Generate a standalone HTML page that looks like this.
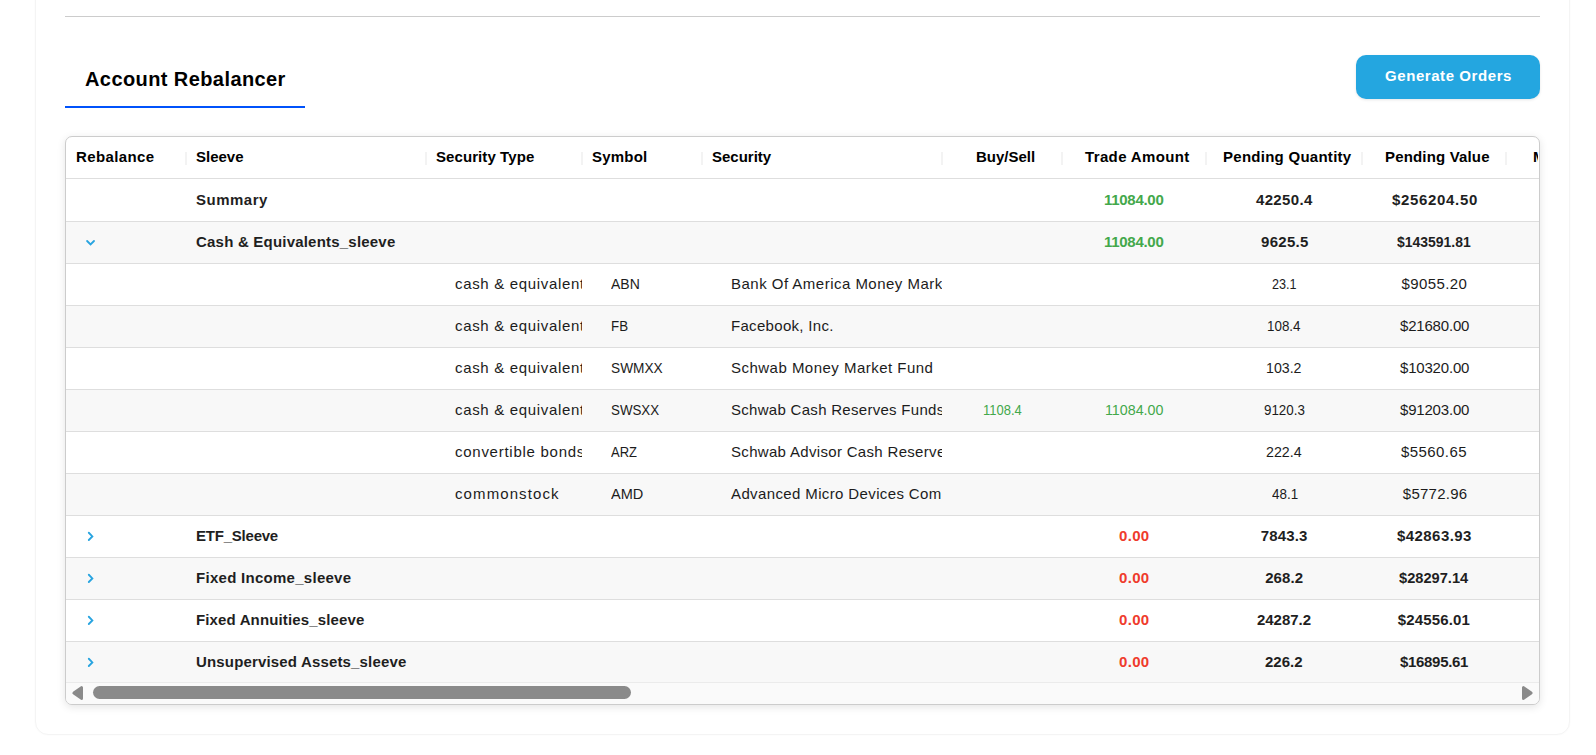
<!DOCTYPE html>
<html><head><meta charset="utf-8">
<style>
html,body{margin:0;padding:0;width:1596px;height:755px;overflow:hidden;background:#fff;}
body{position:relative;font-family:"Liberation Sans",sans-serif;}
.card{position:absolute;left:35px;top:-20px;height:755px;border:1px solid #f4f4f4;border-radius:13px;box-shadow:0 0 2px rgba(0,0,0,.03);box-sizing:border-box;width:1535px;}
.topline{position:absolute;left:65px;top:16px;width:1475px;height:1px;background:#cccccc;}
.tab{position:absolute;left:65px;top:106px;width:240px;height:2px;background:#0052fb;}
.btn{position:absolute;left:1356px;top:55px;width:184px;height:44px;border-radius:10px;background:#24a6e0;box-shadow:0 1px 3px rgba(0,0,0,.10);}
.tbl{position:absolute;left:65px;top:136px;width:1475px;height:569px;box-sizing:border-box;border:1px solid #cccccc;border-radius:7px;box-shadow:0 2px 9px rgba(0,0,0,.11);overflow:hidden;background:#fff;}
.row{position:absolute;left:0;width:1473px;height:42px;box-sizing:border-box;border-bottom:1px solid #dedede;}
.alt{background:#f8f8f8;}
.sep{position:absolute;top:15px;width:2px;height:13px;background:#f3f3f3;}
.sbar{position:absolute;left:0;top:545px;width:1473px;height:22px;box-sizing:border-box;border-top:1px solid #ebebeb;background:#fafafa;}
.thumb{position:absolute;left:27px;top:3px;width:538px;height:13px;border-radius:7px;background:#8a8a8a;}
.t{position:absolute;white-space:nowrap;line-height:18px;font-size:15px;}
.th{font-weight:bold;color:#000;}
.tb{font-weight:bold;color:#1f1f1f;}
.tr{color:#1c1c1c;}
.cg{color:#43a84b;}
.cr{color:#ef3b2c;}
.ttl{font-weight:bold;color:#000;font-size:20px;line-height:22px;}
.bt{font-weight:bold;color:#fff;font-size:15px;}
.clip{position:absolute;overflow:hidden;}
.chev{position:absolute;}
</style></head><body>
<div class="card"></div>
<div class="topline"></div>
<div class="tab"></div>
<div class="btn"></div>
<div class="tbl">
  <div class="row" style="top:0;height:42px">
    <div class="sep" style="left:119px"></div>
    <div class="sep" style="left:359px"></div>
    <div class="sep" style="left:515px"></div>
    <div class="sep" style="left:635px"></div>
    <div class="sep" style="left:875px"></div>
    <div class="sep" style="left:995px"></div>
    <div class="sep" style="left:1139px"></div>
    <div class="sep" style="left:1295px"></div>
    <div class="sep" style="left:1439px"></div>
  </div>
  <div class="row" style="top:42px;height:43px"></div>
  <div class="row alt" style="top:85px"></div>
  <div class="row" style="top:127px"></div>
  <div class="row alt" style="top:169px"></div>
  <div class="row" style="top:211px"></div>
  <div class="row alt" style="top:253px"></div>
  <div class="row" style="top:295px"></div>
  <div class="row alt" style="top:337px"></div>
  <div class="row" style="top:379px"></div>
  <div class="row alt" style="top:421px"></div>
  <div class="row" style="top:463px"></div>
  <div class="row alt" style="top:505px;height:41px;border-bottom:0"></div>
  <div class="sbar">
    <svg style="position:absolute;left:5px;top:2px" width="13" height="16" viewBox="0 0 13 16"><path d="M2.9 8 L10.5 2.6 L10.5 13.4 Z" fill="#8a8a8a" stroke="#8a8a8a" stroke-width="3" stroke-linejoin="round"/></svg>
    <div class="thumb"></div>
    <svg style="position:absolute;left:1455px;top:2px" width="13" height="16" viewBox="0 0 13 16"><path d="M10.1 8 L2.5 2.6 L2.5 13.4 Z" fill="#8a8a8a" stroke="#8a8a8a" stroke-width="3" stroke-linejoin="round"/></svg>
  </div>
</div>
<svg class="chev" style="left:84px;top:234px" width="14" height="14" viewBox="0 0 14 14"><path d="M3.1 7 L6.55 10.4 L10 7" fill="none" stroke="#28a4e0" stroke-width="1.85" stroke-linecap="round" stroke-linejoin="miter"/></svg>
<svg class="chev" style="left:84px;top:529px" width="14" height="14" viewBox="0 0 14 14"><path d="M4.8 3.75 L8.35 7.4 L4.8 11" fill="none" stroke="#28a4e0" stroke-width="1.85" stroke-linecap="round" stroke-linejoin="miter"/></svg>
<svg class="chev" style="left:84px;top:571px" width="14" height="14" viewBox="0 0 14 14"><path d="M4.8 3.75 L8.35 7.4 L4.8 11" fill="none" stroke="#28a4e0" stroke-width="1.85" stroke-linecap="round" stroke-linejoin="miter"/></svg>
<svg class="chev" style="left:84px;top:613px" width="14" height="14" viewBox="0 0 14 14"><path d="M4.8 3.75 L8.35 7.4 L4.8 11" fill="none" stroke="#28a4e0" stroke-width="1.85" stroke-linecap="round" stroke-linejoin="miter"/></svg>
<svg class="chev" style="left:84px;top:655px" width="14" height="14" viewBox="0 0 14 14"><path d="M4.8 3.75 L8.35 7.4 L4.8 11" fill="none" stroke="#28a4e0" stroke-width="1.85" stroke-linecap="round" stroke-linejoin="miter"/></svg>
<span id="h0" class="t th" style="left:76.00px;top:148px;letter-spacing:0.375px">Rebalance</span>
<span id="h1" class="t th" style="left:196.00px;top:148px;letter-spacing:0.000px">Sleeve</span>
<span id="h2" class="t th" style="left:436.00px;top:148px;letter-spacing:0.083px">Security Type</span>
<span id="h3" class="t th" style="left:592.00px;top:148px;letter-spacing:0.200px">Symbol</span>
<span id="h4" class="t th" style="left:712.00px;top:148px;letter-spacing:0.000px">Security</span>
<span id="h5" class="t th" style="left:976.00px;top:148px;letter-spacing:0.000px">Buy/Sell</span>
<span id="h6" class="t th" style="left:1085.00px;top:148px;letter-spacing:0.364px">Trade Amount</span>
<span id="h7" class="t th" style="left:1223.00px;top:148px;letter-spacing:0.267px">Pending Quantity</span>
<span id="h8" class="t th" style="left:1385.00px;top:148px;letter-spacing:0.167px">Pending Value</span>
<div class="clip" style="left:1505px;width:33px;top:143px;height:28px"><span id="h9" class="t th" style="left:28.00px;top:5px;letter-spacing:0.200px">Market Value</span></div>
<span id="r0_0" class="t tb" style="left:196.00px;top:191px;letter-spacing:0.500px">Summary</span>
<span id="r0_1" class="t tb cg" style="left:1104.00px;top:191px;letter-spacing:-0.286px">11084.00</span>
<span id="r0_2" class="t tb" style="left:1256.00px;top:191px;letter-spacing:0.333px">42250.4</span>
<span id="r0_3" class="t tb" style="left:1392.00px;top:191px;letter-spacing:0.667px">$256204.50</span>
<span id="r1_0" class="t tb" style="left:196.00px;top:233px;letter-spacing:0.208px">Cash &amp; Equivalents_sleeve</span>
<span id="r1_1" class="t tb cg" style="left:1104.00px;top:233px;letter-spacing:-0.286px">11084.00</span>
<span id="r1_2" class="t tb" style="left:1261.00px;top:233px;letter-spacing:0.300px">9625.5</span>
<span id="r1_3" class="t tb" style="left:1397.00px;top:233px;letter-spacing:0.000px;transform:scaleX(0.9309);transform-origin:0 0">$143591.81</span>
<div class="clip" style="left:426px;width:156px;top:270px;height:26px"><span id="r2_0" class="t tr" style="left:29.00px;top:5px;letter-spacing:0.667px">cash &amp; equivalents</span></div>
<span id="r2_1" class="t tr" style="left:611.00px;top:275px;letter-spacing:0.000px;transform:scaleX(0.9333);transform-origin:0 0">ABN</span>
<div class="clip" style="left:702px;width:240px;top:270px;height:26px"><span id="r2_2" class="t tr" style="left:29.00px;top:5px;letter-spacing:0.480px">Bank Of America Money Market Fund</span></div>
<span id="r2_3" class="t tr" style="left:1272.00px;top:275px;letter-spacing:0.000px;transform:scaleX(0.8406);transform-origin:0 0">23.1</span>
<span id="r2_4" class="t tr" style="left:1401.60px;top:275px;letter-spacing:0.386px">$9055.20</span>
<div class="clip" style="left:426px;width:156px;top:312px;height:26px"><span id="r3_0" class="t tr" style="left:29.00px;top:5px;letter-spacing:0.667px">cash &amp; equivalents</span></div>
<span id="r3_1" class="t tr" style="left:611.00px;top:317px;letter-spacing:0.000px;transform:scaleX(0.8889);transform-origin:0 0">FB</span>
<div class="clip" style="left:702px;width:240px;top:312px;height:26px"><span id="r3_2" class="t tr" style="left:29.00px;top:5px;letter-spacing:0.308px">Facebook, Inc.</span></div>
<span id="r3_3" class="t tr" style="left:1267.00px;top:317px;letter-spacing:0.000px;transform:scaleX(0.8927);transform-origin:0 0">108.4</span>
<span id="r3_4" class="t tr" style="left:1400.00px;top:317px;letter-spacing:-0.188px">$21680.00</span>
<div class="clip" style="left:426px;width:156px;top:354px;height:26px"><span id="r4_0" class="t tr" style="left:29.00px;top:5px;letter-spacing:0.667px">cash &amp; equivalents</span></div>
<span id="r4_1" class="t tr" style="left:611.00px;top:359px;letter-spacing:0.000px;transform:scaleX(0.9123);transform-origin:0 0">SWMXX</span>
<div class="clip" style="left:702px;width:240px;top:354px;height:26px"><span id="r4_2" class="t tr" style="left:29.00px;top:5px;letter-spacing:0.478px">Schwab Money Market Fund</span></div>
<span id="r4_3" class="t tr" style="left:1266.00px;top:359px;letter-spacing:0.000px;transform:scaleX(0.9444);transform-origin:0 0">103.2</span>
<span id="r4_4" class="t tr" style="left:1400.00px;top:359px;letter-spacing:-0.188px">$10320.00</span>
<div class="clip" style="left:426px;width:156px;top:396px;height:26px"><span id="r5_0" class="t tr" style="left:29.00px;top:5px;letter-spacing:0.667px">cash &amp; equivalents</span></div>
<span id="r5_1" class="t tr" style="left:611.00px;top:401px;letter-spacing:0.000px;transform:scaleX(0.8889);transform-origin:0 0">SWSXX</span>
<div class="clip" style="left:702px;width:240px;top:396px;height:26px"><span id="r5_2" class="t tr" style="left:29.00px;top:5px;letter-spacing:0.292px">Schwab Cash Reserves Funds</span></div>
<span id="r5_3" class="t tr cg" style="left:983.00px;top:401px;letter-spacing:0.000px;transform:scaleX(0.8642);transform-origin:0 0">1108.4</span>
<span id="r5_4" class="t tr cg" style="left:1105.00px;top:401px;letter-spacing:0.000px;transform:scaleX(0.9500);transform-origin:0 0">11084.00</span>
<span id="r5_5" class="t tr" style="left:1264.00px;top:401px;letter-spacing:0.000px;transform:scaleX(0.8913);transform-origin:0 0">9120.3</span>
<span id="r5_6" class="t tr" style="left:1400.00px;top:401px;letter-spacing:-0.188px">$91203.00</span>
<div class="clip" style="left:426px;width:156px;top:438px;height:26px"><span id="r6_0" class="t tr" style="left:29.00px;top:5px;letter-spacing:0.733px">convertible bonds</span></div>
<span id="r6_1" class="t tr" style="left:611.00px;top:443px;letter-spacing:0.000px;transform:scaleX(0.8667);transform-origin:0 0">ARZ</span>
<div class="clip" style="left:702px;width:240px;top:438px;height:26px"><span id="r6_2" class="t tr" style="left:29.00px;top:5px;letter-spacing:0.320px">Schwab Advisor Cash Reserves</span></div>
<span id="r6_3" class="t tr" style="left:1266.00px;top:443px;letter-spacing:0.000px;transform:scaleX(0.9474);transform-origin:0 0">222.4</span>
<span id="r6_4" class="t tr" style="left:1401.00px;top:443px;letter-spacing:0.429px">$5560.65</span>
<div class="clip" style="left:426px;width:156px;top:480px;height:26px"><span id="r7_0" class="t tr" style="left:29.00px;top:5px;letter-spacing:1.100px">commonstock</span></div>
<span id="r7_1" class="t tr" style="left:611.00px;top:485px;letter-spacing:0.000px;transform:scaleX(0.9697);transform-origin:0 0">AMD</span>
<div class="clip" style="left:702px;width:240px;top:480px;height:26px"><span id="r7_2" class="t tr" style="left:29.00px;top:5px;letter-spacing:0.375px">Advanced Micro Devices Common Stock</span></div>
<span id="r7_3" class="t tr" style="left:1271.80px;top:485px;letter-spacing:0.000px;transform:scaleX(0.8932);transform-origin:0 0">48.1</span>
<span id="r7_4" class="t tr" style="left:1402.80px;top:485px;letter-spacing:0.257px">$5772.96</span>
<span id="r8_0" class="t tb" style="left:196.00px;top:527px;letter-spacing:-0.222px">ETF_Sleeve</span>
<span id="r8_1" class="t tb cr" style="left:1119.00px;top:527px;letter-spacing:0.333px">0.00</span>
<span id="r8_2" class="t tb" style="left:1260.80px;top:527px;letter-spacing:0.140px">7843.3</span>
<span id="r8_3" class="t tb" style="left:1397.00px;top:527px;letter-spacing:0.438px">$42863.93</span>
<span id="r9_0" class="t tb" style="left:196.00px;top:569px;letter-spacing:0.278px">Fixed Income_sleeve</span>
<span id="r9_1" class="t tb cr" style="left:1119.00px;top:569px;letter-spacing:0.333px">0.00</span>
<span id="r9_2" class="t tb" style="left:1265.20px;top:569px;letter-spacing:0.075px">268.2</span>
<span id="r9_3" class="t tb" style="left:1399.20px;top:569px;letter-spacing:0.000px;transform:scaleX(0.9752);transform-origin:0 0">$28297.14</span>
<span id="r10_0" class="t tb" style="left:196.00px;top:611px;letter-spacing:0.143px">Fixed Annuities_sleeve</span>
<span id="r10_1" class="t tb cr" style="left:1119.00px;top:611px;letter-spacing:0.333px">0.00</span>
<span id="r10_2" class="t tb" style="left:1257.00px;top:611px;letter-spacing:-0.033px">24287.2</span>
<span id="r10_3" class="t tb" style="left:1397.80px;top:611px;letter-spacing:0.150px">$24556.01</span>
<span id="r11_0" class="t tb" style="left:196.00px;top:653px;letter-spacing:0.160px">Unsupervised Assets_sleeve</span>
<span id="r11_1" class="t tb cr" style="left:1119.00px;top:653px;letter-spacing:0.333px">0.00</span>
<span id="r11_2" class="t tb" style="left:1265.00px;top:653px;letter-spacing:0.000px">226.2</span>
<span id="r11_3" class="t tb" style="left:1400.00px;top:653px;letter-spacing:-0.312px">$16895.61</span>
<span id="ttl" class="t ttl" style="left:85.00px;top:68px;letter-spacing:0.412px">Account Rebalancer</span>
<span id="bt" class="t bt" style="left:1385.00px;top:67px;letter-spacing:0.571px">Generate Orders</span>
</body></html>
